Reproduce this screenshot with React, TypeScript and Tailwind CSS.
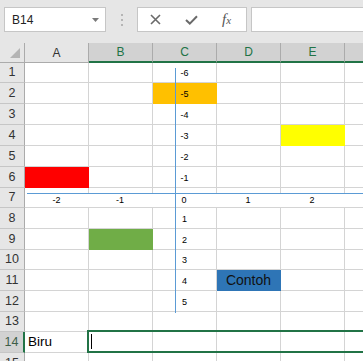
import React from 'react';

const cols = ['A', 'B', 'C', 'D', 'E', 'F'];

const rows = [
  { n: 1, h: 'h-[20px]' },
  { n: 2, h: 'h-[21px]' },
  { n: 3, h: 'h-[21px]' },
  { n: 4, h: 'h-[21px]' },
  { n: 5, h: 'h-[21px]' },
  { n: 6, h: 'h-[21px]' },
  { n: 7, h: 'h-[20px]' },
  { n: 8, h: 'h-[21px]' },
  { n: 9, h: 'h-[21px]' },
  { n: 10, h: 'h-[20px]' },
  { n: 11, h: 'h-[21px]' },
  { n: 12, h: 'h-[21px]' },
  { n: 13, h: 'h-[20px]' },
  { n: 14, h: 'h-[21px]' },
  { n: 15, h: 'h-[21px]' },
];

const fills: Record<string, string> = {
  C2: 'bg-[#ffc000] border-[#ffc000]',
  E4: 'bg-[#ffff00] border-[#ffff00]',
  A6: 'bg-[#ff0000] border-[#ff0000]',
  B9: 'bg-[#70ad47] border-[#70ad47]',
  D11: 'bg-[#2e75b6] border-[#2e75b6]',
};

// y-axis labels of the chart sit in column C
const yLabels: Record<number, string> = {
  1: '-6', 2: '-5', 3: '-4', 4: '-3', 5: '-2', 6: '-1',
  8: '1', 9: '2', 10: '3', 11: '4', 12: '5',
};

function CellContent({ col, row }: { col: string; row: number }) {
  if (col === 'C' && yLabels[row]) {
    return (
      <span className="w-full text-center pt-[3px] text-[9px] text-black font-['Liberation_Sans',sans-serif]">
        {yLabels[row]}
      </span>
    );
  }
  if (col === 'D' && row === 11) {
    return <span className="w-full text-center text-[14px] text-[#111]">Contoh</span>;
  }
  if (col === 'A' && row === 14) {
    return <span className="pl-[3px] text-[13.5px] text-black">Biru</span>;
  }
  return null;
}

export default function App() {
  return (
    <div className="relative w-[363px] h-[361px] overflow-hidden bg-[#e6e6e6] font-['Liberation_Sans',sans-serif]">
      {/* name box + formula bar */}
      <div className="h-[43px] flex items-start pt-[7px] pl-[4px]">
        <div className="w-[102px] h-[25px] bg-white border border-[#c6c6c6] flex items-center justify-between pl-[7px] pr-[6px]">
          <span className="text-[12px] text-[#222]">B14</span>
          <svg width="7" height="4" viewBox="0 0 7 4">
            <path d="M0 0 L7 0 L3.5 4 Z" fill="#7a7a7a" />
          </svg>
        </div>
        <div className="w-[31px] h-[25px] flex flex-col items-center justify-center gap-[3px]">
          <span className="w-[2px] h-[2px] bg-[#b5b5b5]" />
          <span className="w-[2px] h-[2px] bg-[#b5b5b5]" />
          <span className="w-[2px] h-[2px] bg-[#b5b5b5]" />
        </div>
        <div className="w-[110px] h-[25px] bg-white border border-[#c6c6c6] flex items-center">
          <svg className="ml-[12px]" width="11" height="11" viewBox="0 0 11 11">
            <path d="M1 1 L10 10 M10 1 L1 10" stroke="#6a6a6a" strokeWidth="1.6" />
          </svg>
          <svg className="ml-[24px]" width="13" height="10" viewBox="0 0 13 10">
            <path d="M1 5 L4.8 8.6 L12 1.2" stroke="#6a6a6a" strokeWidth="2" fill="none" />
          </svg>
          <span className="ml-[24px] italic text-[15px] text-[#555] font-['Liberation_Serif',serif] leading-none">
            f<span className="text-[11px]">x</span>
          </span>
        </div>
        <div className="ml-[4px] flex-1 h-[25px] bg-white border border-[#c6c6c6] border-r-0" />
      </div>

      {/* column headers */}
      <div className="flex h-[20px]">
        <div className="w-[25px] shrink-0 border-r border-b border-[#ababab] flex items-end justify-end pr-[4px] pb-[4px]">
          <svg width="10" height="10" viewBox="0 0 10 10">
            <path d="M10 0 L10 10 L0 10 Z" fill="#b4b4b4" />
          </svg>
        </div>
        {cols.map((c) =>
          c === 'A' ? (
            <div
              key={c}
              className="w-[64px] shrink-0 border-r border-b border-[#ababab] flex items-center justify-center text-[12px] text-[#333]"
            >
              {c}
            </div>
          ) : (
            <div
              key={c}
              className="w-[64px] shrink-0 border-r border-[#ababab] border-b-2 border-b-[#217346] bg-[#d2d2d2] flex items-center justify-center text-[12px] text-[#217346]"
            >
              {c}
            </div>
          ),
        )}
      </div>

      {/* rows */}
      {rows.map((r) => (
        <div key={r.n} className={`flex ${r.h}`}>
          {r.n === 14 ? (
            <div className="w-[25px] shrink-0 bg-[#d2d2d2] border-r-2 border-r-[#217346] border-b border-b-[#c6c6c6] flex items-center justify-center text-[12.5px] text-[#3d5e48]">
              {r.n}
            </div>
          ) : (
            <div className="w-[25px] shrink-0 border-r border-r-[#ababab] border-b border-b-[#c6c6c6] flex items-center justify-center text-[12.5px] text-[#333]">
              {r.n}
            </div>
          )}
          {cols.map((c) => {
            const key = `${c}${r.n}`;
            const fill = fills[key] ?? 'bg-white border-[#d4d4d4]';
            return (
              <div key={key} className={`w-[64px] shrink-0 border-r border-b flex items-center ${fill}`}>
                <CellContent col={c} row={r.n} />
              </div>
            );
          })}
        </div>
      ))}

      {/* chart axes over the sheet */}
      <div className="absolute left-[175px] top-[68px] w-px h-[245px] bg-[#5b9bd5]" />
      <div className="absolute left-[25px] top-[194px] right-0 h-[13px] bg-white flex text-[9px] text-black">
        <div className="w-[63px] text-center">-2</div>
        <div className="w-[64px] text-center">-1</div>
        <div className="w-[64px] text-center">0</div>
        <div className="w-[64px] text-center">1</div>
        <div className="w-[64px] text-center">2</div>
      </div>
      <div className="absolute left-[175px] top-[194px] w-px h-[13px] bg-[#5b9bd5]" />
      <div className="absolute left-[27px] top-[193px] right-0 h-px bg-[#5b9bd5]" />

      {/* active selection B14 */}
      <div className="absolute left-[87px] top-[330px] w-[300px] h-[23px] border-2 border-[#217346]" />
      <div className="absolute left-[91px] top-[334px] w-px h-[15px] bg-black" />
    </div>
  );
}
